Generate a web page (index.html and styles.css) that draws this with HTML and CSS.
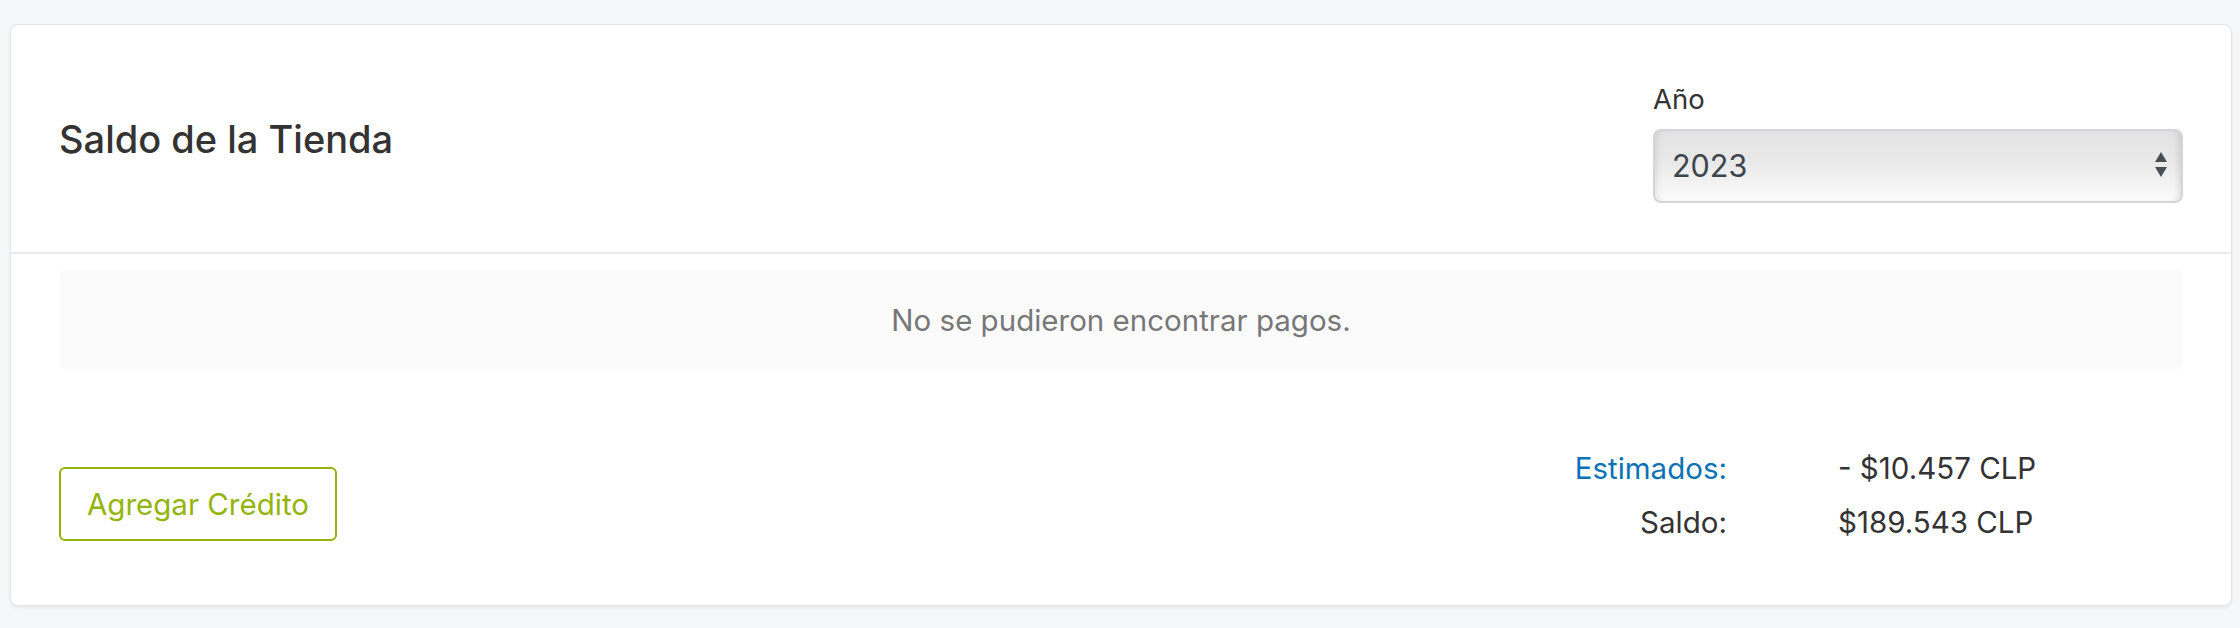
FILE: index.html
```html
<!DOCTYPE html>
<html lang="es">
  <head>
    <meta charset="UTF-8" />
    <meta name="viewport" content="width=device-width, initial-scale=1.0" />
    <title>Saldo de la Tienda</title>
    <link rel="stylesheet" href="styles.css">
  </head>
  <body>
    <div class="card">
      <div class="card-header">
        <h2 class="card-title">Saldo de la Tienda</h2>
        <div class="year-field">
          <label class="year-label" for="year">Año</label>
          <div class="select-wrap">
            <select id="year" class="year-select">
              <option>2023</option>
              <option>2022</option>
              <option>2021</option>
            </select>
            <svg class="select-arrows" width="14" height="28" viewBox="0 0 14 28">
              <path d="M7 1 L13 11 L1 11 Z" fill="#474f57" />
              <path d="M1 16 L13 16 L7 26 Z" fill="#474f57" />
            </svg>
          </div>
        </div>
      </div>

      <div class="card-body">
        <div class="empty-state">No se pudieron encontrar pagos.</div>
      </div>

      <div class="card-footer">
        <button class="btn-outline">Agregar Crédito</button>
        <div class="totals">
          <span class="totals-label estimated">Estimados:</span>
          <span class="totals-value">- $10.457 CLP</span>
          <span class="totals-label">Saldo:</span>
          <span class="totals-value">$189.543 CLP</span>
        </div>
      </div>
    </div>
  </body>
</html>
```

FILE: styles.css
```css
* {
  margin: 0;
  padding: 0;
  box-sizing: border-box;
}

body {
  background-color: #f6f7f9;
  font-family: Inter, "Open Sans", sans-serif;
  color: #333;
  padding: 24px 8px 22px 10px;
}

.card {
  background: #fff;
  border: 1px solid #e2e4e8;
  border-radius: 8px;
  box-shadow: 0 2px 3px rgba(0, 0, 0, 0.06);
}

/* cabecera con titulo y selector de año */
.card-header {
  display: flex;
  justify-content: space-between;
  align-items: center;
  height: 229px;
  padding: 0 48px;
  border-bottom: 2px solid #e9eaee;
}

.card-title {
  font-size: 38px;
  font-weight: 500;
  color: #333;
}

.year-field {
  display: flex;
  flex-direction: column;
  gap: 12px;
  width: 530px;
  margin-top: 6px;
}

.year-label {
  font-size: 27.5px;
  line-height: 36px;
  color: #333;
}

.select-wrap {
  position: relative;
}

.year-select {
  appearance: none;
  -webkit-appearance: none;
  width: 100%;
  height: 74px;
  padding: 0 17px;
  font-family: inherit;
  font-size: 30.5px;
  color: #3d454d;
  border: 2px solid #d2d6da;
  border-radius: 8px;
  background: linear-gradient(#e3e3e3, #e9e9e9 45%, #fbfbfb);
  box-shadow: inset 6px 0 6px -4px rgba(0, 0, 0, 0.08), inset -6px 0 6px -4px rgba(0, 0, 0, 0.12);
  outline: none;
}

.select-arrows {
  position: absolute;
  right: 15px;
  top: 22px;
  pointer-events: none;
}

.card-body {
  padding: 16px 48px 0;
}

.empty-state {
  height: 99px;
  display: flex;
  align-items: center;
  justify-content: center;
  background: #fbfbfc;
  border-radius: 6px;
  font-size: 29.5px;
  color: #777;
}

.card-footer {
  display: flex;
  justify-content: space-between;
  align-items: flex-start;
  padding: 72px 48px 56px;
}

.btn-outline {
  margin-top: 26px;
  height: 74px;
  padding: 0 26px;
  background: #fff;
  border: 2px solid #93b40b;
  border-radius: 6px;
  color: #93b40b;
  font-family: inherit;
  font-size: 29.5px;
  cursor: pointer;
}

.totals {
  display: grid;
  grid-template-columns: auto 200px;
  column-gap: 111px;
  margin-right: 145px;
  font-size: 29.5px;
  line-height: 54px;
}

.totals-label {
  text-align: right;
  color: #333;
}

.totals-label.estimated {
  color: #0b72b5;
}

.totals-value {
  color: #333;
}
```
